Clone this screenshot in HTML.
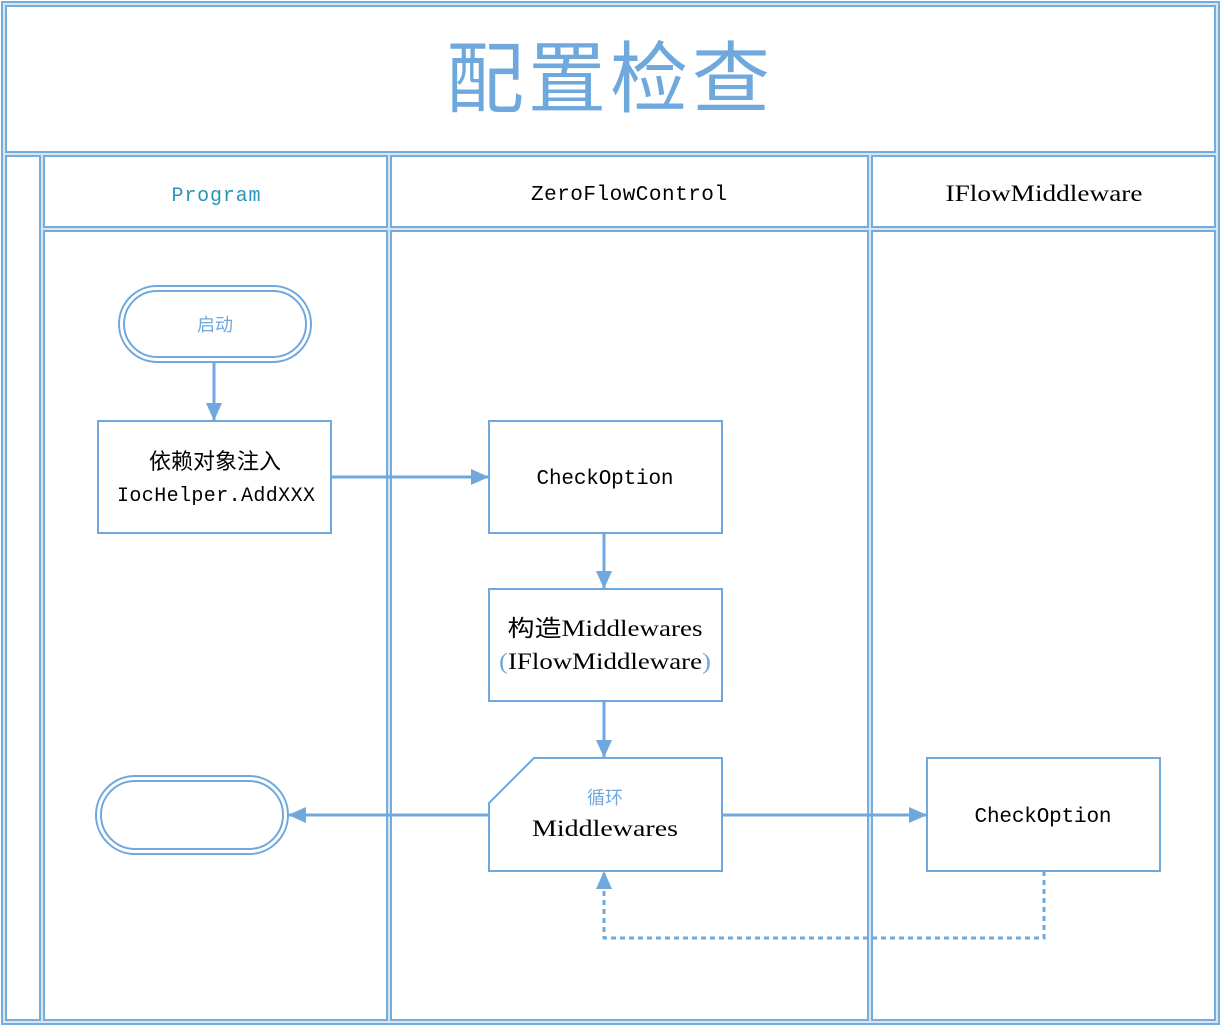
<!DOCTYPE html>
<html><head><meta charset="utf-8"><style>
html,body{margin:0;padding:0;background:#fff;width:1221px;height:1026px;overflow:hidden}
svg{display:block}
.m{font-family:"Liberation Mono","Noto Sans CJK SC",monospace}
.s{font-family:"Liberation Serif","Noto Sans CJK SC",serif}
.c{font-family:"Liberation Sans","Noto Sans CJK SC",sans-serif}
</style></head><body>
<svg width="1221" height="1026" viewBox="0 0 1221 1026" xmlns="http://www.w3.org/2000/svg">
<defs>
<marker id="a" markerWidth="18" markerHeight="18" refX="17" refY="9" orient="auto" markerUnits="userSpaceOnUse" viewBox="0 0 18 18">
<path d="M0,1 L18,9 L0,17 z" fill="#6fa8dc"/></marker>
</defs>
<g fill="none">
<g stroke="#76acdb" stroke-width="6">
<rect x="4" y="4" width="1213" height="1018"/>
<line x1="4" y1="154" x2="1217" y2="154"/>
<line x1="42" y1="154" x2="42" y2="1022"/>
<line x1="389" y1="154" x2="389" y2="1022"/>
<line x1="870" y1="154" x2="870" y2="1022"/>
<line x1="42" y1="229" x2="1217" y2="229"/>
</g>
<g stroke="#d6e6f4" stroke-width="2">
<rect x="4" y="4" width="1213" height="1018"/>
<line x1="4" y1="154" x2="1217" y2="154"/>
<line x1="42" y1="154" x2="42" y2="1022"/>
<line x1="389" y1="154" x2="389" y2="1022"/>
<line x1="870" y1="154" x2="870" y2="1022"/>
<line x1="42" y1="229" x2="1217" y2="229"/>
</g>
<g stroke="#6fa8dc" stroke-width="2">
<rect x="119" y="286" width="192" height="76" rx="38"/>
<rect x="124" y="291" width="182" height="66" rx="33"/>
<rect x="96" y="776" width="192" height="78" rx="39"/>
<rect x="101" y="781" width="182" height="68" rx="34"/>
<rect x="98" y="421" width="233" height="112"/>
<rect x="489" y="421" width="233" height="112"/>
<rect x="489" y="589" width="233" height="112"/>
<path d="M534,758 L722,758 L722,871 L489,871 L489,803 Z"/>
<rect x="927" y="758" width="233" height="113"/>
</g>
<g stroke="#6fa8dc" stroke-width="3">
<line x1="214" y1="362" x2="214" y2="420" marker-end="url(#a)"/>
<line x1="331" y1="477" x2="488" y2="477" marker-end="url(#a)"/>
<line x1="604" y1="533" x2="604" y2="588" marker-end="url(#a)"/>
<line x1="604" y1="701" x2="604" y2="757" marker-end="url(#a)"/>
<line x1="722" y1="815" x2="926" y2="815" marker-end="url(#a)"/>
<line x1="489" y1="815" x2="289" y2="815" marker-end="url(#a)"/>
<path d="M1044,871 L1044,938 L604,938 L604,872" stroke-dasharray="5,4" marker-end="url(#a)"/>
</g>
</g>
<text x="610" y="106" text-anchor="middle" class="c" font-size="78" fill="#6fa8dc" letter-spacing="4">配置检查</text>
<text x="216" y="201" text-anchor="middle" class="m" font-size="20" fill="#2a94b8" textLength="89">Program</text>
<text x="629" y="200" text-anchor="middle" class="m" font-size="21" fill="#000" textLength="196">ZeroFlowControl</text>
<text x="1044" y="201" text-anchor="middle" class="s" font-size="23" fill="#000" textLength="197" lengthAdjust="spacingAndGlyphs">IFlowMiddleware</text>
<text x="215" y="331" text-anchor="middle" class="c" font-size="18" fill="#6fa8dc">启动</text>
<text x="215" y="469" text-anchor="middle" class="c" font-size="22" fill="#000">依赖对象注入</text>
<text x="216" y="501" text-anchor="middle" class="m" font-size="20" fill="#000" textLength="198">IocHelper.AddXXX</text>
<text x="605" y="484" text-anchor="middle" class="m" font-size="21" fill="#000" textLength="137">CheckOption</text>
<text x="605" y="636" text-anchor="middle" class="s" font-size="23" fill="#000" textLength="195" lengthAdjust="spacingAndGlyphs"><tspan class="c">构造</tspan>Middlewares</text>
<text x="605" y="669" text-anchor="middle" class="s" font-size="23" fill="#000" textLength="212" lengthAdjust="spacingAndGlyphs"><tspan fill="#6fa8dc">(</tspan>IFlowMiddleware<tspan fill="#6fa8dc">)</tspan></text>
<text x="605" y="804" text-anchor="middle" class="c" font-size="18" fill="#6fa8dc">循环</text>
<text x="605" y="836" text-anchor="middle" class="s" font-size="23" fill="#000" textLength="146" lengthAdjust="spacingAndGlyphs">Middlewares</text>
<text x="1043" y="822" text-anchor="middle" class="m" font-size="21" fill="#000" textLength="137">CheckOption</text>
</svg>
</body></html>
